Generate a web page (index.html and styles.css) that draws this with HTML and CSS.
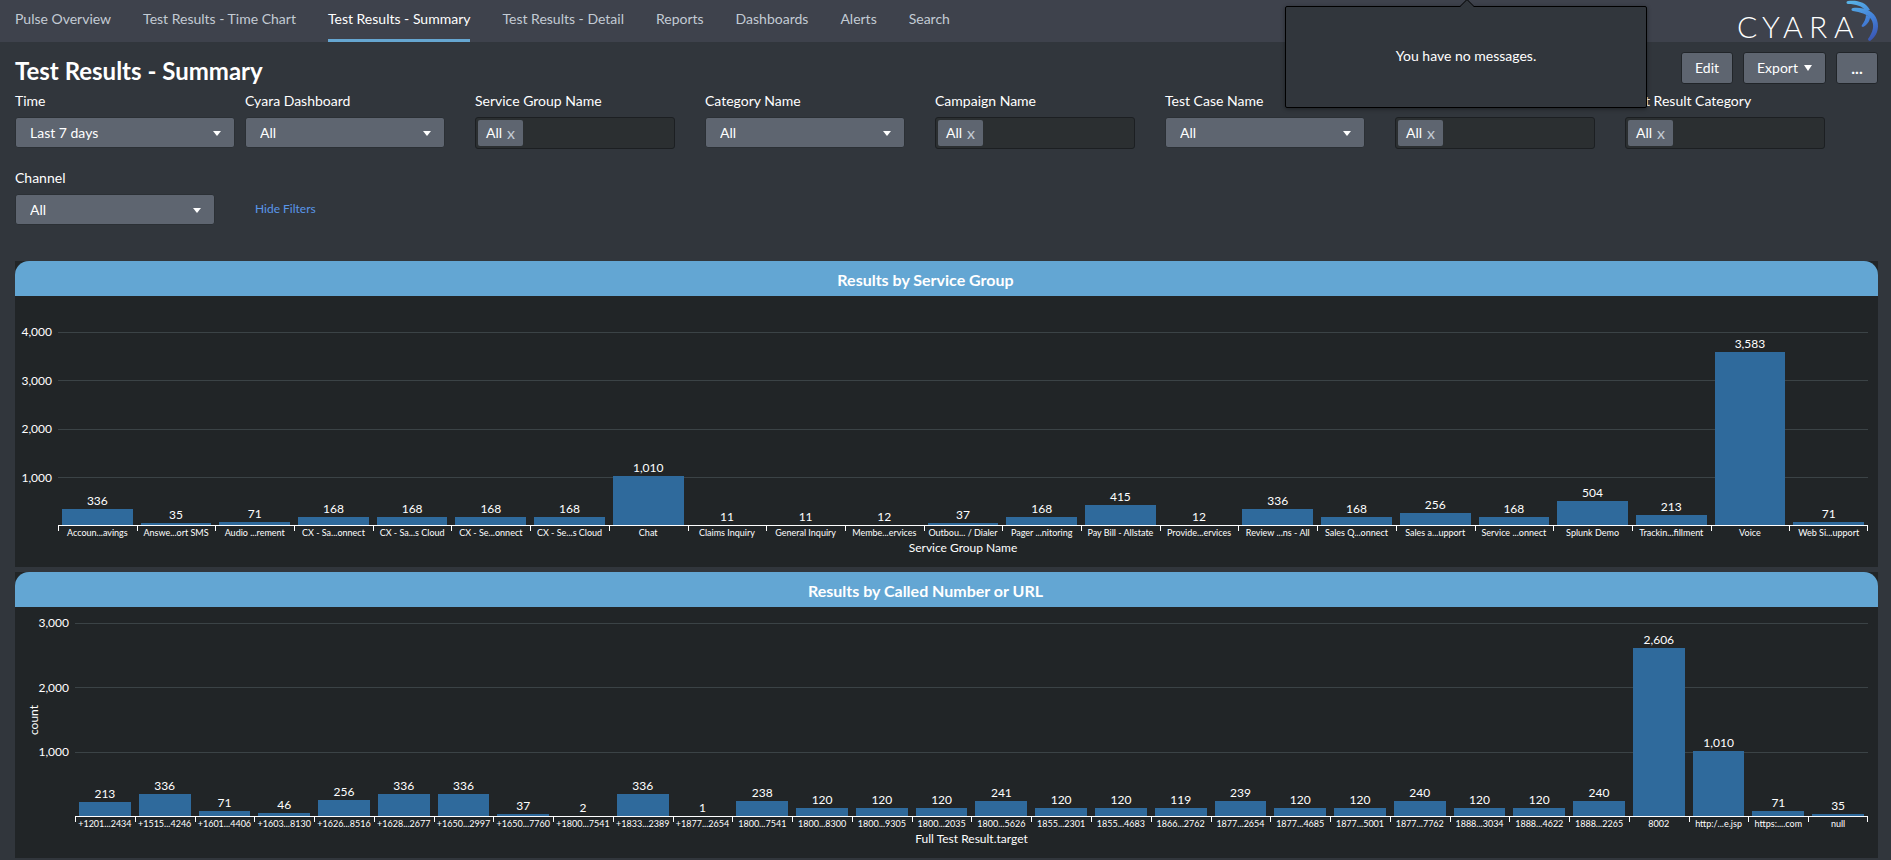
FILE: index.html
```
<!DOCTYPE html>
<html lang="en">
<head>
<meta charset="utf-8">
<title>Test Results - Summary</title>
<link rel="stylesheet" href="styles.css">
</head>
<body>
<header class="topbar">
  <nav class="nav">
    <a class="nav-link" href="#">Pulse Overview</a>
    <a class="nav-link" href="#">Test Results - Time Chart</a>
    <a class="nav-link active" href="#" aria-current="page">Test Results - Summary</a>
    <a class="nav-link" href="#">Test Results - Detail</a>
    <a class="nav-link" href="#">Reports</a>
    <a class="nav-link" href="#">Dashboards</a>
    <a class="nav-link" href="#">Alerts</a>
    <a class="nav-link" href="#">Search</a>
  </nav>
  <svg class="logo" width="142" height="42" viewBox="0 0 142 42" role="img" aria-label="Cyara">
    <defs>
      <linearGradient id="wing" gradientUnits="userSpaceOnUse" x1="114" y1="2" x2="134" y2="41">
        <stop offset="0" stop-color="#58b2e6"></stop>
        <stop offset="0.5" stop-color="#4484da"></stop>
        <stop offset="1" stop-color="#3a56b4"></stop>
      </linearGradient>
    </defs>
    <text class="wordmark" y="38" x="1 26 47 73 98">CYARA</text>
    <path fill="url(#wing)" d="M112 1c9-1 18 1 22 9l-4 1c-4-5-10-7-18-7-2 0-2-3 0-3z"></path>
    <path fill="url(#wing)" d="M130 15l4 2c0 4-3 8-7 10-1 0-2-1-1-2 2-3 4-6 4-10z"></path>
    <path fill="url(#wing)" d="M117 8c11-1 21 3 24 12 3 9-1 17-7 21-1 0-2-1-2-2 5-7 7-14 3-20-4-5-11-7-18-8-2 0-2-3 0-3z"></path>
  </svg>
</header>

<aside class="messages" role="status">
  <svg class="messages-arrow" width="14" height="8" viewBox="0 0 14 8" aria-hidden="true">
    <path fill="#31363c" d="M0 8L7 0l7 8z"></path>
    <path fill="none" stroke="#000" d="M0 7.500L7 0.500l7 7"></path>
  </svg>
  You have no messages.
</aside>

<main class="page">
  <div class="heading">
    <h1 class="title">Test Results - Summary</h1>
    <div class="actions">
      <button class="btn" type="button">Edit</button>
      <button class="btn" type="button">Export <span class="caret"></span></button>
      <button class="btn more" type="button">...</button>
    </div>
  </div>

  <form class="filters">
    <div class="filter">
      <label class="label" for="time">Time</label>
      <div class="picker wide"><select id="time" class="select"><option>Last 7 days</option></select></div>
    </div>
    <div class="filter">
      <label class="label" for="dash">Cyara Dashboard</label>
      <div class="picker"><select id="dash" class="select"><option>All</option></select></div>
    </div>
    <div class="filter">
      <label class="label" for="group">Service Group Name</label>
      <div class="multi"><button class="token" type="button">All <span class="remove">x</span></button><input id="group" class="multi-input" type="text"></div>
    </div>
    <div class="filter">
      <label class="label" for="category">Category Name</label>
      <div class="picker"><select id="category" class="select"><option>All</option></select></div>
    </div>
    <div class="filter">
      <label class="label" for="campaign">Campaign Name</label>
      <div class="multi"><button class="token" type="button">All <span class="remove">x</span></button><input id="campaign" class="multi-input" type="text"></div>
    </div>
    <div class="filter">
      <label class="label" for="case">Test Case Name</label>
      <div class="picker"><select id="case" class="select"><option>All</option></select></div>
    </div>
    <div class="filter">
      <label class="label" for="result">Test Result</label>
      <div class="multi"><button class="token" type="button">All <span class="remove">x</span></button><input id="result" class="multi-input" type="text"></div>
    </div>
    <div class="filter">
      <label class="label" for="result-category">Test Result Category</label>
      <div class="multi"><button class="token" type="button">All <span class="remove">x</span></button><input id="result-category" class="multi-input" type="text"></div>
    </div>
    <div class="filter">
      <label class="label" for="channel">Channel</label>
      <div class="picker"><select id="channel" class="select"><option>All</option></select></div>
    </div>
    <div class="filter hide"><a class="hide-link" href="#">Hide Filters</a></div>
  </form>

  <section class="panel">
    <h2 class="panel-title">Results by Service Group</h2>
    <div class="chart roomy" id="service-groups"></div>
  </section>
  <section class="panel">
    <h2 class="panel-title">Results by Called Number or URL</h2>
    <div class="chart" id="called-numbers"></div>
  </section>
</main>
<script src="charts.js"></script>
</body>
</html>
```
FILE: styles.css
```
* { box-sizing: border-box; }

body {
  margin: 0;
  background: #31363c;
  color: #fff;
  font: 14px/20px Lato, "Open Sans", sans-serif;
}

button, input, select { font: inherit; color: inherit; }

.topbar {
  display: flex;
  justify-content: space-between;
  height: 42px;
  padding: 0 13px 0 15px;
  background: #3e424c;
}

.nav { display: flex; gap: 32px; }

.nav-link {
  padding-top: 9px;
  color: #c3cbd4;
  text-decoration: none;
  white-space: nowrap;
}

.nav-link.active {
  color: #fff;
  border-bottom: 3px solid #65a6d1;
}

.logo { display: block; flex: none; overflow: visible; }

.wordmark {
  fill: #fff;
  font-family: Lato, sans-serif;
  font-size: 30px;
  font-weight: 300;
}

.messages {
  position: absolute;
  top: 6px;
  right: 244px;
  z-index: 2;
  display: flex;
  align-items: center;
  justify-content: center;
  width: 362px;
  height: 102px;
  padding-bottom: 2px;
  background: #31363c;
  border: 1px solid #000;
  border-radius: 2px;
  box-shadow: 0 1px 4px rgba(0, 0, 0, 0.4);
}

.messages-arrow {
  position: absolute;
  top: -8px;
  left: 174px;
}

.page { padding: 0 13px 2px 15px; }

.heading {
  display: flex;
  justify-content: space-between;
  align-items: flex-start;
  padding-top: 10px;
}

.title {
  margin: 5px 0 0;
  font-size: 24px;
  line-height: 28px;
  font-weight: 700;
}

.actions { display: flex; gap: 10px; }

.btn {
  display: flex;
  align-items: center;
  justify-content: center;
  gap: 6px;
  height: 32px;
  padding: 0 13px;
  background: #5e6570;
  border: 1px solid #212529;
  border-radius: 3px;
}

.more { width: 42px; font-size: 16px; font-weight: 700; }

.caret {
  border: 4px solid transparent;
  border-top: 6px solid #fff;
  border-bottom: 0;
}

.filters {
  display: grid;
  grid-template-columns: repeat(auto-fill, 230px);
  row-gap: 20px;
  margin-top: 7px;
}

.label { display: block; margin-bottom: 7px; line-height: 18px; }

.picker {
  position: relative;
  width: 200px;
}

.picker.wide { width: 220px; }

.picker::after {
  content: "";
  position: absolute;
  top: 14px;
  right: 14px;
  border: 4px solid transparent;
  border-top: 5px solid #fff;
  border-bottom: 0;
  pointer-events: none;
}

.select {
  display: block;
  width: 100%;
  height: 31px;
  padding: 0 14px;
  appearance: none;
  background: #5e6570;
  border: 1px solid #2b3035;
  border-radius: 3px;
}

.multi {
  display: flex;
  width: 200px;
  height: 32px;
  padding: 2px;
  background: #2b2f31;
  border: 1px solid #1c1f22;
  border-radius: 3px;
}

.token {
  display: flex;
  align-items: center;
  gap: 5px;
  padding: 0 8px;
  background: #5e6570;
  border: 0;
  border-radius: 2px;
}

.remove { color: #c3cbd4; font-size: 16px; }

.multi-input {
  flex: 1;
  min-width: 0;
  background: none;
  border: 0;
}

.hide {
  display: flex;
  align-items: flex-end;
  padding: 0 0 6px 10px;
}

.hide-link {
  color: #5a96ea;
  font-size: 12px;
  text-decoration: none;
}

.panel {
  margin-top: 5px;
  background: #212527;
}

.filters + .panel { margin-top: 36px; }

.panel-title {
  margin: 0;
  padding: 9px 42px 6px 0;
  background: #63a6d3;
  border-radius: 14px 14px 0 0;
  font-size: 16px;
  line-height: 20px;
  text-align: center;
}

.chart {
  display: grid;
  grid-template-columns: auto 1fr;
  padding: 16px 10px 11px 5px;
  font-size: 12px;
  line-height: 16px;
}

.chart.roomy { padding-top: 36px; }

.y-side { display: flex; align-items: center; }

.y-title {
  width: 10px;
  margin: 0 -2px 0 9px;
  line-height: 10px;
  writing-mode: vertical-rl;
  rotate: 180deg;
}

.y-axis {
  display: grid;
  grid-auto-rows: 1fr;
  align-self: stretch;
  width: 38px;
  padding-right: 6px;
  text-align: right;
}

.y-label { height: 16px; margin-top: -8px; }

.plot {
  display: grid;
  height: 194px;
  border-bottom: 1px solid #fff;
}

.lines, .bars { grid-area: 1 / 1; }

.lines { display: grid; grid-auto-rows: 1fr; }

.line { border-top: 1px solid #3b4346; }

.bars, .categories {
  display: grid;
  grid-auto-flow: column;
  grid-auto-columns: minmax(0, 1fr);
}

.column {
  display: flex;
  flex-direction: column;
  justify-content: flex-end;
  padding: 0 4px;
  text-align: center;
}

.bar { flex: none; background: #2f6a9c; }

.categories, .x-title { grid-column: 2; }

.category {
  background: linear-gradient(#fff, #fff) 0 0 / 1px 5px no-repeat;
  font-size: 9px;
  line-height: 14px;
  text-align: center;
  white-space: nowrap;
}

.category:last-child {
  background: linear-gradient(#fff, #fff) 0 0 / 1px 5px no-repeat, linear-gradient(#fff, #fff) 100% 0 / 1px 5px no-repeat;
}

.x-title { text-align: center; }
```
FILE: charts.js
```
const serviceGroups = [
  ["Accoun...avings", 336], ["Answe...ort SMS", 35], ["Audio ...rement", 71],
  ["CX - Sa...onnect", 168], ["CX - Sa...s Cloud", 168], ["CX - Se...onnect", 168],
  ["CX - Se...s Cloud", 168], ["Chat", 1010], ["Claims Inquiry", 11],
  ["General Inquiry", 11], ["Membe...ervices", 12], ["Outbou... / Dialer", 37],
  ["Pager ...nitoring", 168], ["Pay Bill - Allstate", 415], ["Provide...ervices", 12],
  ["Review ...ns - All", 336], ["Sales Q...onnect", 168], ["Sales a...upport", 256],
  ["Service ...onnect", 168], ["Splunk Demo", 504], ["Trackin...fillment", 213],
  ["Voice", 3583], ["Web Si...upport", 71]
];

const calledNumbers = [
  ["+1201...2434", 213], ["+1515...4246", 336], ["+1601...4406", 71],
  ["+1603...8130", 46], ["+1626...8516", 256], ["+1628...2677", 336],
  ["+1650...2997", 336], ["+1650...7760", 37], ["+1800...7541", 2],
  ["+1833...2389", 336], ["+1877...2654", 1], ["1800...7541", 238],
  ["1800...8300", 120], ["1800...9305", 120], ["1800...2035", 120],
  ["1800...5626", 241], ["1855...2301", 120], ["1855...4683", 120],
  ["1866...2762", 119], ["1877...2654", 239], ["1877...4685", 120],
  ["1877...5001", 120], ["1877...7762", 240], ["1888...3034", 120],
  ["1888...4622", 120], ["1888...2265", 240], ["8002", 2606],
  ["http:/...e.jsp", 1010], ["https:....com", 71], ["null", 35]
];

const format = n => n.toLocaleString("en-US");

function drawChart(id, data, max, xTitle, yTitle) {
  const steps = [];
  for (let v = max; v > 0; v -= 1000) steps.push(v);

  document.getElementById(id).innerHTML = `
    <div class="y-side">
      ${yTitle ? `<div class="y-title">${yTitle}</div>` : ""}
      <div class="y-axis">${steps.map(v => `<div class="y-label">${format(v)}</div>`).join("")}</div>
    </div>
    <div class="plot">
      <div class="lines">${steps.map(() => `<div class="line"></div>`).join("")}</div>
      <div class="bars">${data.map(([, n]) => `
        <div class="column">${format(n)}<div class="bar" style="height:${n < 20 ? 0 : n / max * 100}%"></div></div>`).join("")}
      </div>
    </div>
    <div class="categories">${data.map(([name]) => `<div class="category">${name}</div>`).join("")}</div>
    <div class="x-title">${xTitle}</div>`;
}

drawChart("service-groups", serviceGroups, 4000, "Service Group Name", "");
drawChart("called-numbers", calledNumbers, 3000, "Full Test Result.target", "count");
```
